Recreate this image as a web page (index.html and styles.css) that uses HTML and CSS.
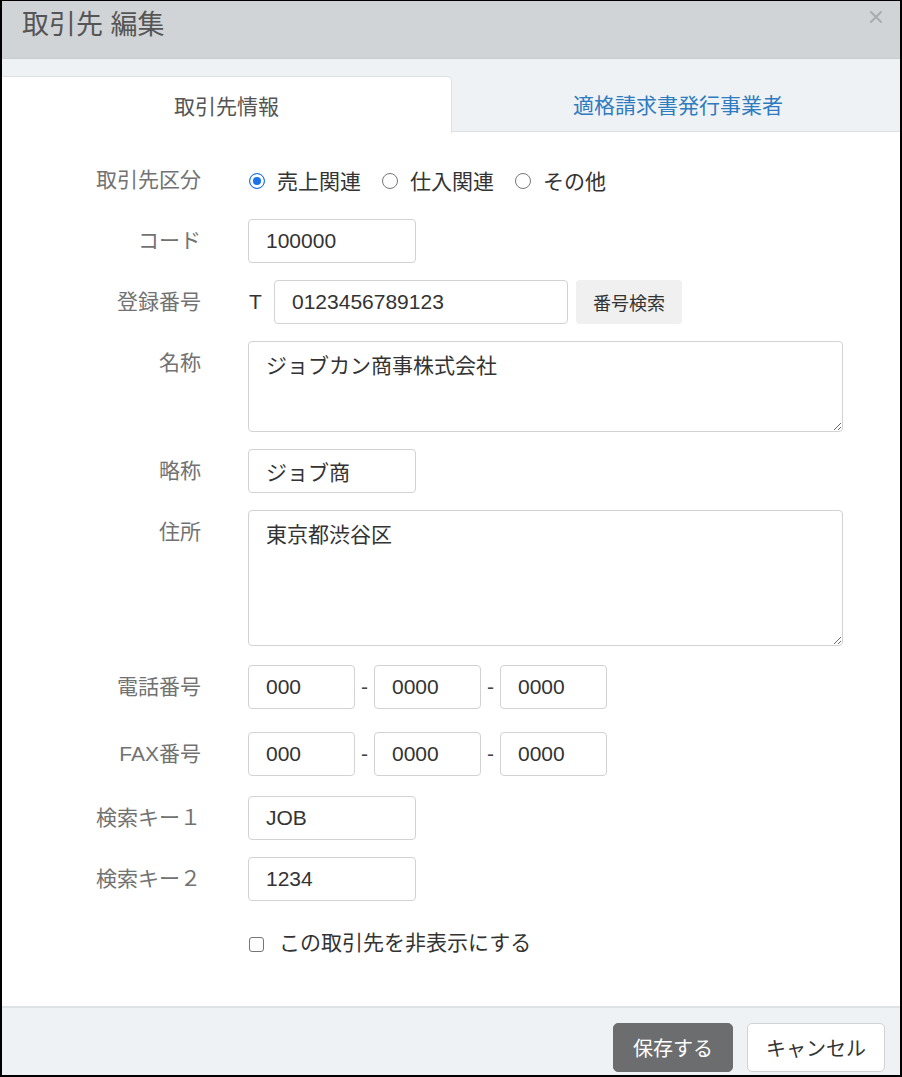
FILE: index.html
```html
<!DOCTYPE html>
<html>

<head>
    <meta charset="utf-8">
    <link rel="stylesheet" href="styles.css">
</head>

<body>
    <div class="modal">
        <div class="modal-header">
            <h1>取引先 編集</h1>
            <span class="close-btn">
                <svg width="14" height="14" viewBox="0 0 14 14">
                    <path d="M2 2 L12 12 M12 2 L2 12" stroke="#a9acaf" stroke-width="2" stroke-linecap="round" />
                </svg>
            </span>
        </div>

        <div class="tabs">
            <div class="tab active">取引先情報</div>
            <div class="tab">適格請求書発行事業者</div>
        </div>

        <div class="modal-body">
            <div class="form-row">
                <label class="form-label">取引先区分</label>
                <div class="radio-group">
                    <label class="radio-item"><input type="radio" name="kind" checked>売上関連</label>
                    <label class="radio-item"><input type="radio" name="kind">仕入関連</label>
                    <label class="radio-item"><input type="radio" name="kind">その他</label>
                </div>
            </div>

            <div class="form-row">
                <label class="form-label" for="code">コード</label>
                <input type="text" id="code" class="input-short" value="100000">
            </div>

            <div class="form-row">
                <label class="form-label" for="reg-no">登録番号</label>
                <span class="prefix">T</span>
                <input type="text" id="reg-no" class="input-reg" value="0123456789123">
                <button class="btn-search">番号検索</button>
            </div>

            <div class="form-row">
                <label class="form-label" for="name">名称</label>
                <textarea id="name" class="textarea-name">ジョブカン商事株式会社</textarea>
            </div>

            <div class="form-row">
                <label class="form-label" for="short-name">略称</label>
                <input type="text" id="short-name" class="input-short" value="ジョブ商">
            </div>

            <div class="form-row">
                <label class="form-label" for="address">住所</label>
                <textarea id="address" class="textarea-address">東京都渋谷区</textarea>
            </div>

            <div class="form-row row-tel">
                <label class="form-label">電話番号</label>
                <input type="text" class="input-tel" value="000">
                <span class="dash">-</span>
                <input type="text" class="input-tel" value="0000">
                <span class="dash">-</span>
                <input type="text" class="input-tel" value="0000">
            </div>

            <div class="form-row row-fax">
                <label class="form-label">FAX番号</label>
                <input type="text" class="input-tel" value="000">
                <span class="dash">-</span>
                <input type="text" class="input-tel" value="0000">
                <span class="dash">-</span>
                <input type="text" class="input-tel" value="0000">
            </div>

            <div class="form-row row-key1">
                <label class="form-label" for="key1">検索キー１</label>
                <input type="text" id="key1" class="input-short" value="JOB">
            </div>

            <div class="form-row">
                <label class="form-label" for="key2">検索キー２</label>
                <input type="text" id="key2" class="input-short" value="1234">
            </div>

            <div class="form-row row-check">
                <span class="form-label"></span>
                <label class="check-item"><input type="checkbox">この取引先を非表示にする</label>
            </div>
        </div>

        <div class="modal-footer">
            <button class="btn-save">保存する</button>
            <button class="btn-cancel">キャンセル</button>
        </div>
    </div>
</body>

</html>
```

FILE: styles.css
```css
* {
    box-sizing: border-box;
}

body {
    margin: 0;
    font-family: "Liberation Sans", "Noto Sans CJK JP", sans-serif;
    font-size: 21px;
    color: #333;
    background: #fff;
}

.modal {
    height: 1077px;
    display: flex;
    flex-direction: column;
    border: 2px solid #000;
    border-top-width: 1px;
    overflow: hidden;
}

.modal-header {
    height: 57px;
    background-color: #d1d4d7;
    display: flex;
    justify-content: space-between;
    align-items: flex-start;
    padding: 0 17px 0 20px;
}

.modal-header h1 {
    margin: 6px 0 0;
    font-size: 27px;
    font-weight: normal;
    color: #555;
    line-height: 36px;
}

.close-btn {
    margin-top: 9px;
    display: flex;
}

.tabs {
    height: 74px;
    background-color: #eef2f5;
    display: flex;
    align-items: flex-end;
    border-top: 1px solid #c9ccd0;
}

.tab {
    height: 56px;
    display: flex;
    align-items: center;
    justify-content: center;
    font-size: 21px;
}

.tab.active {
    width: 450px;
    background-color: #fff;
    color: #555;
    border-top: 1px solid #dde1e5;
    border-right: 1px solid #dde1e5;
    border-top-right-radius: 5px;
    margin-bottom: -1px;
    height: 57px;
    position: relative;
}

.tab:not(.active) {
    flex: 1;
    color: #2f7bc0;
    border-bottom: 1px solid #dde1e5;
    padding-left: 4px;
}

.modal-body {
    flex: 1;
    padding-top: 26px;
    display: flex;
    flex-direction: column;
    gap: 17px;
}

.form-row {
    display: flex;
    align-items: flex-start;
}

.form-label {
    width: 199px;
    margin-right: 47px;
    text-align: right;
    line-height: 44px;
    color: #727272;
    font-size: 21px;
    flex-shrink: 0;
}

.radio-group {
    display: flex;
    align-items: center;
    height: 44px;
    gap: 20px;
}

.radio-item {
    display: flex;
    align-items: center;
    color: #333;
}

.radio-item input {
    appearance: none;
    flex-shrink: 0;
    width: 16px;
    height: 16px;
    margin: 2px 12px 0 1px;
    border: 1px solid #767676;
    border-radius: 50%;
    background: #fff;
}

.radio-item input:checked {
    border-color: #1a73e8;
    background-color: #1a73e8;
    box-shadow: inset 0 0 0 3px #fff;
}

input[type="text"],
textarea {
    height: 44px;
    padding: 0 17px;
    border: 1px solid #d2d2d2;
    border-radius: 4px;
    font-family: inherit;
    font-size: 21px;
    color: #333;
    background: #fff;
}

textarea {
    padding: 9px 17px;
    width: 595px;
    line-height: 30px;
}

.input-short {
    width: 168px;
}

.prefix {
    line-height: 44px;
    width: 26px;
    padding-left: 1px;
}

.input-reg {
    width: 294px;
}

.btn-search {
    margin-left: 8px;
    width: 106px;
    height: 44px;
    border: none;
    border-radius: 4px;
    background-color: #f0f0f0;
    color: #333;
    font-family: inherit;
    font-size: 18px;
}

.textarea-name {
    height: 91px;
}

.textarea-address {
    height: 136px;
}

.input-tel {
    width: 107px;
}

.dash {
    width: 19px;
    text-align: center;
    line-height: 44px;
    color: #444;
}

.row-tel {
    margin-top: 2px;
}

.row-fax {
    margin-top: 6px;
}

.row-key1 {
    margin-top: 3px;
}

.row-check {
    margin-top: 3px;
}

.check-item {
    display: flex;
    align-items: center;
    line-height: 44px;
    color: #333;
}

.check-item input {
    appearance: none;
    flex-shrink: 0;
    width: 15px;
    height: 15px;
    margin: 2px 15px 0 1px;
    border: 1px solid #767676;
    border-radius: 3px;
    background: #fff;
}

.modal-footer {
    height: 69px;
    border-top: 2px solid #dfe2e5;
    background-color: #eef2f5;
    display: flex;
    justify-content: flex-end;
    align-items: flex-start;
    gap: 14px;
    padding: 15px 15px 0 0;
}

.modal-footer button {
    height: 49px;
    border-radius: 5px;
    font-family: inherit;
    font-size: 20px;
}

.btn-save {
    width: 120px;
    background-color: #6b6d6f;
    border: 1px solid #6b6d6f;
    color: #fff;
}

.btn-cancel {
    width: 138px;
    background-color: #fff;
    border: 1px solid #d2d2d2;
    color: #333;
}
```
